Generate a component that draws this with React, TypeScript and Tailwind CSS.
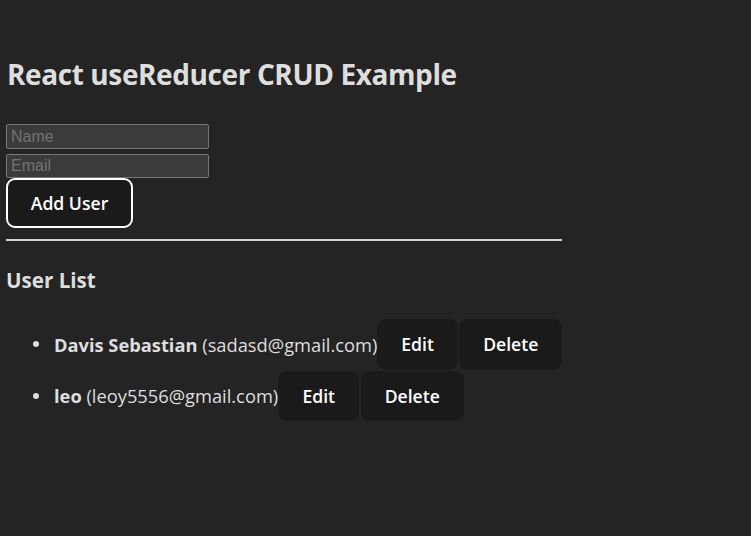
import React, { useState } from 'react';

type User = { id: number; name: string; email: string };

const initialUsers: User[] = [
  { id: 1, name: 'Davis Sebastian', email: 'sadasd@gmail.com' },
  { id: 2, name: 'leo', email: 'leoy5556@gmail.com' },
];

export default function App() {
  const [users] = useState<User[]>(initialUsers);

  return (
    <div className="min-h-[536px] bg-[#242424] text-[#dedede] font-['Open_Sans',sans-serif]">
      <div className="ml-[6px] w-[556px] pt-[56px]">
        <h1 className="text-[28px] font-bold leading-[36px] tracking-[-0.4px] pl-[1px]">React useReducer CRUD Example</h1>

        <div className="mt-[32px] flex flex-col items-start">
          <input
            placeholder="Name"
            className="h-[25px] w-[203px] rounded-[2px] border border-[#767676] bg-[#3b3b3b] px-[4px] font-['Liberation_Sans',sans-serif] text-[16px] text-white placeholder:text-[#727272] outline-none"
          />
          <input
            placeholder="Email"
            className="mt-[5px] h-[24px] w-[203px] rounded-[2px] border border-[#767676] bg-[#3b3b3b] px-[4px] font-['Liberation_Sans',sans-serif] text-[16px] text-white placeholder:text-[#727272] outline-none"
          />
          <button className="h-[50px] w-[127px] rounded-[9px] border-2 border-white bg-[#1a1a1a] text-[17.6px] font-semibold text-white">
            Add User
          </button>
        </div>

        <hr className="mt-[11px] border-0 border-t-2 border-[#d4d4d4]" />

        <h3 className="mt-[27px] text-[20.6px] font-bold leading-[24px]">User List</h3>

        <ul className="mt-[27px] flex flex-col gap-[1px]">
          {users.map((u) => (
            <li key={u.id} className="flex h-[50.6px] items-center text-[18.3px]">
              <span className="ml-[27px] mr-[15px] h-[6px] w-[6px] rounded-full bg-[#dedede]" />
              <span className="whitespace-pre">
                <strong className="font-bold">{u.name}</strong> ({u.email})
              </span>
              <button className="h-full w-[81px] rounded-[9px] bg-[#1a1a1a] text-[17.6px] font-semibold text-white">
                Edit
              </button>
              <button className="ml-[1.5px] h-full w-[103px] rounded-[9px] bg-[#1a1a1a] text-[17.6px] font-semibold text-white">
                Delete
              </button>
            </li>
          ))}
        </ul>
      </div>
    </div>
  );
}
